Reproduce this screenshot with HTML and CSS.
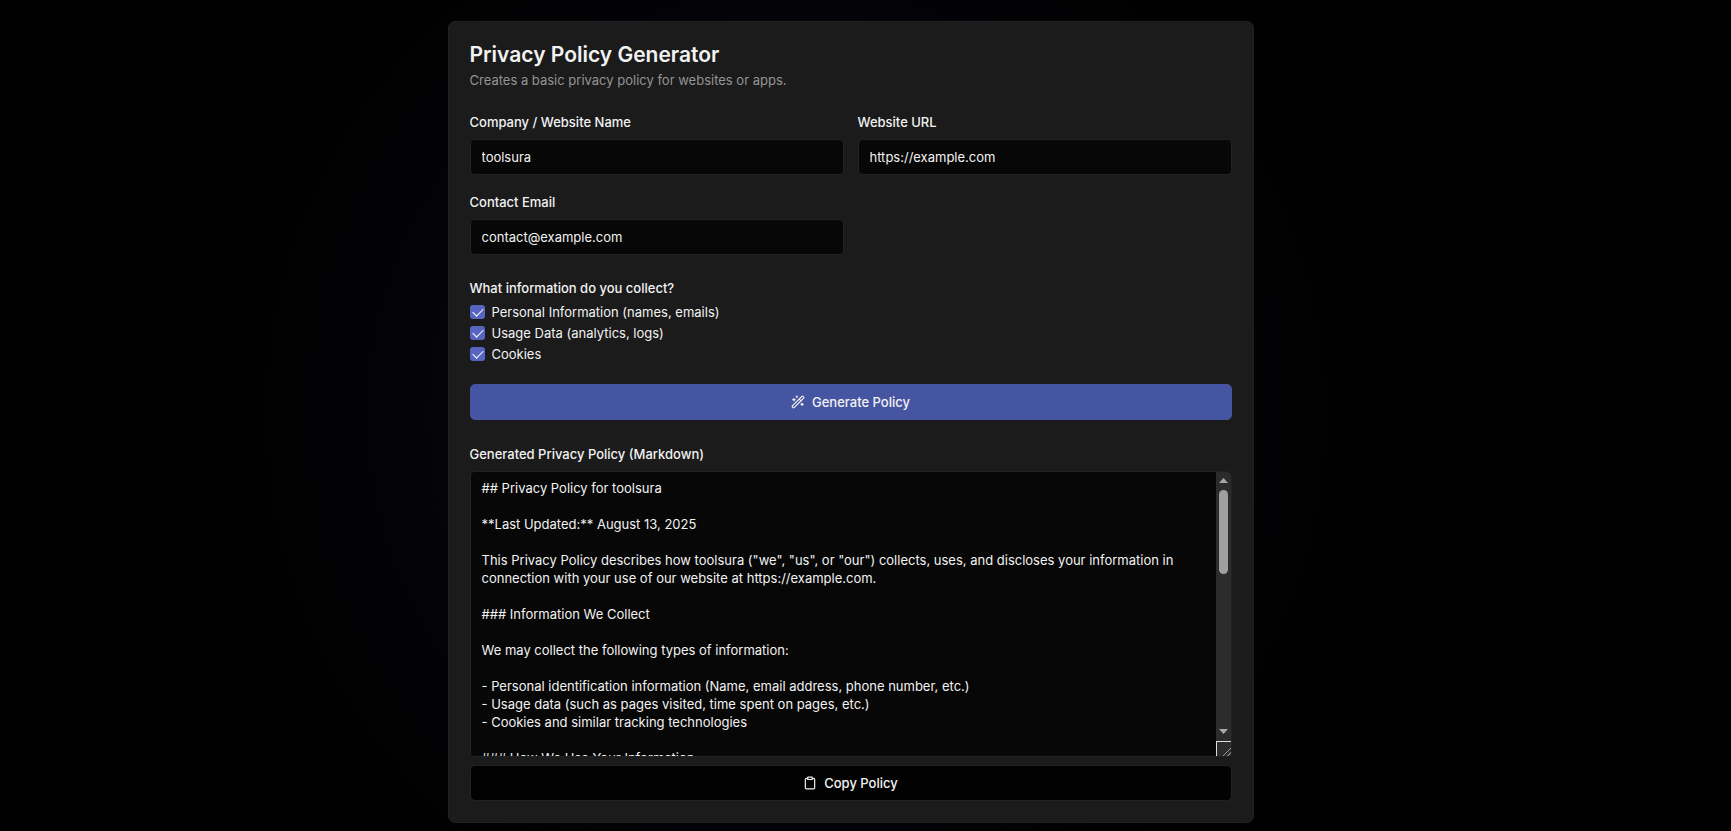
FILE: index.html
```html
<!DOCTYPE html>
<html lang="en">
<head>
  <meta charset="UTF-8">
  <meta name="viewport" content="width=device-width, initial-scale=1.0">
  <title>Privacy Policy Generator</title>
  <link rel="stylesheet" href="styles.css">
</head>
<body>
  <main class="card">
    <header class="card-header">
      <h1>Privacy Policy Generator</h1>
      <p>Creates a basic privacy policy for websites or apps.</p>
    </header>

    <form class="form">
      <div class="fields">
        <div class="field">
          <label for="company">Company / Website Name</label>
          <input class="input" type="text" id="company" value="toolsura">
        </div>
        <div class="field">
          <label for="url">Website URL</label>
          <input class="input" type="text" id="url" value="https://example.com">
        </div>
        <div class="field">
          <label for="email">Contact Email</label>
          <input class="input" type="email" id="email" value="contact@example.com">
        </div>
      </div>

      <fieldset class="checks">
        <legend>What information do you collect?</legend>
        <div class="check">
          <input type="checkbox" id="personal" checked>
          <label for="personal">Personal Information (names, emails)</label>
        </div>
        <div class="check">
          <input type="checkbox" id="usage" checked>
          <label for="usage">Usage Data (analytics, logs)</label>
        </div>
        <div class="check">
          <input type="checkbox" id="cookies" checked>
          <label for="cookies">Cookies</label>
        </div>
      </fieldset>

      <button type="button" class="btn btn-primary">
        <svg class="icon" viewBox="0 0 24 24">
          <path d="m21.64 3.64-1.28-1.28a1.21 1.21 0 0 0-1.72 0L2.36 18.64a1.21 1.21 0 0 0 0 1.72l1.28 1.28a1.2 1.2 0 0 0 1.72 0L21.64 5.36a1.2 1.2 0 0 0 0-1.72"/>
          <path d="m14 7 3 3"/>
          <path d="M5 6v4"/>
          <path d="M19 14v4"/>
          <path d="M10 2v2"/>
          <path d="M7 8H3"/>
          <path d="M21 16h-4"/>
          <path d="M11 3H9"/>
        </svg>
        Generate Policy
      </button>
    </form>

    <section class="output">
      <label for="policy">Generated Privacy Policy (Markdown)</label>
      <div class="policy-wrap">
        <textarea class="policy" id="policy" readonly>
## Privacy Policy for toolsura

**Last Updated:** August 13, 2025

This Privacy Policy describes how toolsura ("we", "us", or "our") collects, uses, and discloses your information in connection with your use of our website at https://example.com.

### Information We Collect

We may collect the following types of information:

- Personal identification information (Name, email address, phone number, etc.)
- Usage data (such as pages visited, time spent on pages, etc.)
- Cookies and similar tracking technologies

### How We Use Your Information

We use the information we collect to:

- Provide, operate, and maintain our website
- Improve, personalize, and expand our website
- Understand and analyze how you use our website
- Communicate with you

### Sharing Your Information

We do not sell, trade, or otherwise transfer your information to outside parties.

### Security

We take reasonable measures to protect your information.

### Changes to This Privacy Policy

We may update our Privacy Policy from time to time.

### Contact Us

If you have any questions, please contact us at:

contact@example.com</textarea>
        <div class="scrollbar" aria-hidden="true">
          <svg class="arrow" viewBox="0 0 9 5"><path d="M0 5 4.5 0 9 5z"/></svg>
          <div class="track"><div class="thumb"></div></div>
          <svg class="arrow" viewBox="0 0 9 5"><path d="M0 0 4.5 5 9 0z"/></svg>
        </div>
      </div>
      <button type="button" class="btn btn-outline">
        <svg class="icon" viewBox="0 0 24 24">
          <rect width="8" height="4" x="8" y="2" rx="1" ry="1"/>
          <path d="M16 4h2a2 2 0 0 1 2 2v14a2 2 0 0 1-2 2H6a2 2 0 0 1-2-2V6a2 2 0 0 1 2-2h2"/>
        </svg>
        Copy Policy
      </button>
    </section>
  </main>
</body>
</html>
```
FILE: styles.css
```css
:root {
  --background: #010101;
  --card: #1b1b1b;
  --field: #070707;
  --border: #222222;
  --text: #f2f2f2;
  --muted: #949494;
  --primary: #4655a2;
  --check: #5865c0;
  --scrollbar: #2c2c2c;
}

* {
  box-sizing: border-box;
  margin: 0;
  padding: 0;
}

body {
  display: flex;
  justify-content: center;
  align-items: flex-start;
  min-height: 100vh;
  padding: 21px 30px 8px 0;
  background: radial-gradient(circle at 46% 50%, #05050b 0, #030308 400px, var(--background) 540px);
  color: var(--text);
  font-family: Inter, sans-serif;
  font-size: 13px;
  line-height: 18px;
}

.card {
  width: 100%;
  max-width: 806px;
  padding: 21px;
  background: var(--card);
  border: 1px solid #202020;
  border-radius: 7px;
}

.card-header {
  margin-bottom: 24px;
}

h1 {
  font-size: 21px;
  font-weight: 600;
  line-height: 24px;
  margin-bottom: 4px;
}

.card-header p {
  color: var(--muted);
}

.form {
  display: flex;
  flex-direction: column;
  gap: 21px;
}

.fields {
  display: grid;
  grid-template-columns: 1fr 1fr;
  gap: 18px 14px;
  margin-bottom: 3px;
}

.field label,
.output label,
legend {
  display: block;
  font-weight: 500;
}

.field label {
  margin-bottom: 8px;
}

.input {
  width: 100%;
  height: 36px;
  padding: 0 11px;
  background: var(--field);
  border: 1px solid var(--border);
  border-radius: 5px;
  color: var(--text);
  font: inherit;
}

.checks {
  border: 0;
}

legend {
  margin-bottom: 6px;
}

.check {
  display: flex;
  align-items: center;
  gap: 7px;
  margin-bottom: 3px;
}

.check:last-child {
  margin-bottom: 0;
}

.check input {
  appearance: none;
  position: relative;
  width: 15px;
  height: 14px;
  background: var(--check);
  border-radius: 3px;
}

/* tick */
.check input:checked::after {
  content: '';
  position: absolute;
  left: 3px;
  top: 3px;
  width: 9px;
  height: 5px;
  border: solid #fff;
  border-width: 0 0 1px 1px;
  transform: rotate(-45deg);
}

.btn {
  display: flex;
  justify-content: center;
  align-items: center;
  gap: 7px;
  width: 100%;
  height: 36px;
  border: 1px solid transparent;
  border-radius: 5px;
  color: var(--text);
  font: inherit;
  font-weight: 500;
  cursor: pointer;
}

.btn-primary {
  background: var(--primary);
  border-color: var(--primary);
}

.btn-outline {
  background: #020202;
  border-color: var(--border);
}

.icon {
  width: 14px;
  height: 14px;
  fill: none;
  stroke: currentColor;
  stroke-width: 2;
  stroke-linecap: round;
  stroke-linejoin: round;
}

.output {
  display: flex;
  flex-direction: column;
  gap: 8px;
  margin-top: 25px;
}

.policy-wrap {
  position: relative;
}

.policy {
  display: block;
  width: 100%;
  height: 286px;
  padding: 7px 26px 7px 11px;
  background: var(--field);
  border: 1px solid var(--border);
  border-radius: 5px;
  color: var(--text);
  font: inherit;
  resize: vertical;
}

/* the native bar is replaced by .scrollbar */
.policy::-webkit-scrollbar {
  width: 0;
}

.policy::-webkit-resizer {
  background: linear-gradient(135deg, transparent 69%, #999 70%, #999 73%, transparent 74%, transparent 85%, #999 86%, #999 89%, transparent 90%) var(--scrollbar);
  border: solid #ddd;
  border-width: 1px 0 0 1px;
}

.scrollbar {
  position: absolute;
  top: 1px;
  right: 1px;
  bottom: 16px;
  display: flex;
  flex-direction: column;
  align-items: center;
  width: 15px;
  padding: 6px 0 7px;
  background: var(--scrollbar);
  border-top-right-radius: 4px;
}

.arrow {
  width: 9px;
  height: 5px;
  fill: #a8a8a8;
}

.track {
  flex: 1;
  padding: 7px 0;
}

.thumb {
  width: 9px;
  height: 36%;
  background: #9f9f9f;
  border-radius: 5px;
}
```
